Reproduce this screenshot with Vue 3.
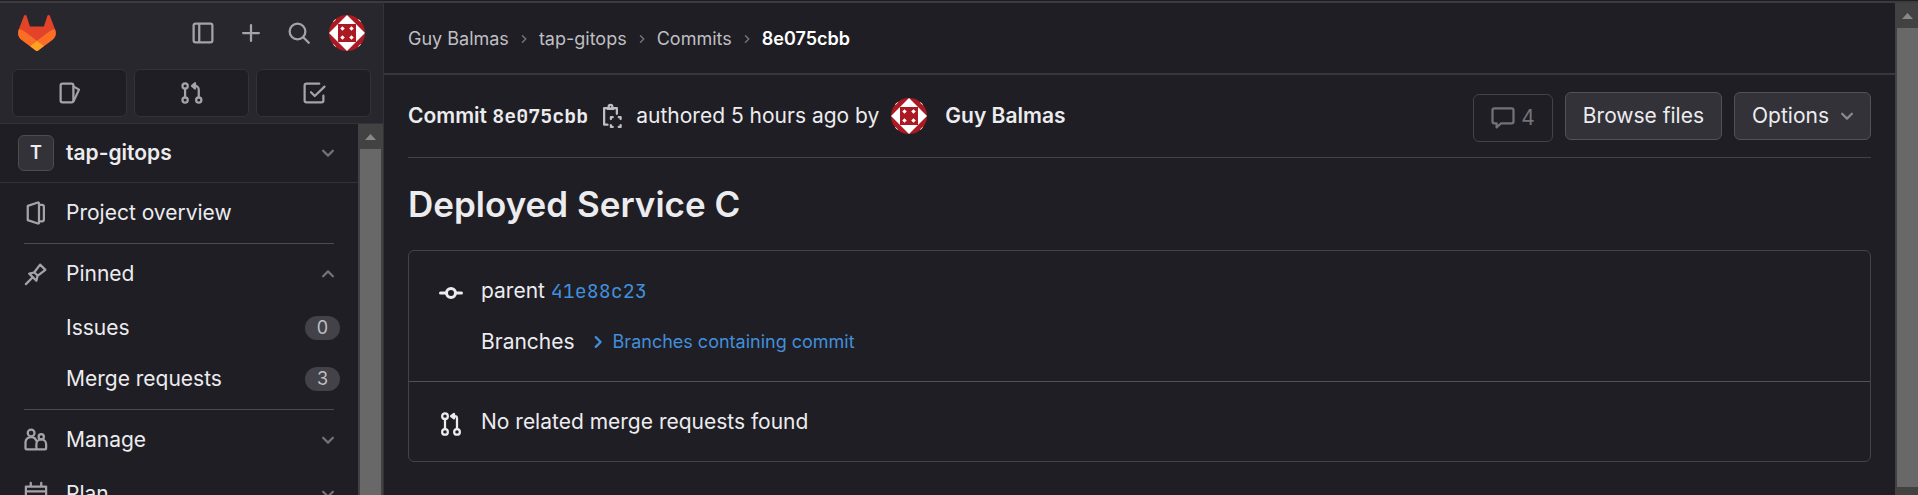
<script setup>
const crumbs = ['Guy Balmas', 'tap-gitops', 'Commits']
const pinned = [
  { label: 'Issues', count: 0 },
  { label: 'Merge requests', count: 3 },
]
</script>

<template>
  <svg class="defs" aria-hidden="true">
    <defs>
      <symbol id="i-down" viewBox="0 0 12 12"><path d="M2.75 4.5 6 7.75 9.25 4.5" /></symbol>
      <symbol id="i-up" viewBox="0 0 12 12"><path d="M2.75 7.5 6 4.25 9.25 7.5" /></symbol>
      <symbol id="i-right" viewBox="0 0 12 12"><path d="M4.5 2.75 7.75 6 4.5 9.25" /></symbol>
      <symbol id="i-avatar" viewBox="0 0 36 36">
        <path class="red" d="M0 0h36v36H0z" />
        <path class="white" d="M18 0 36 18 18 36 0 18z" />
        <path class="red" d="M9 9h18v18H9z" />
        <path class="white" d="M13.500 11.250l2.250 2.250-2.250 2.250-2.250-2.250zM22.500 11.250l2.250 2.250-2.250 2.250-2.250-2.250zM13.500 20.250l2.250 2.250-2.250 2.250-2.250-2.250zM22.500 20.250l2.250 2.250-2.250 2.250-2.250-2.250zM4.500 2l2.500 2.500-2.500 2.500L2 4.500zM31.500 2l2.500 2.500-2.500 2.500L29 4.500zM4.500 29l2.500 2.500-2.500 2.500L2 31.500zM31.500 29l2.500 2.500-2.500 2.500-2.500-2.500z" />
      </symbol>
    </defs>
  </svg>

  <div class="app">
    <aside class="sidebar">
      <header class="top">
        <div class="tools">
          <a href="#" class="logo" aria-label="Homepage">
            <svg viewBox="0 0 25 24">
              <path fill="#e24329" d="m24.507 9.500-.034-.09L21.082.562a.896.896 0 0 0-1.694.091l-2.290 7.010H7.825L5.535.653a.898.898 0 0 0-1.694-.09L.451 9.411.416 9.500a6.297 6.297 0 0 0 2.090 7.278l.012.010.030.022 5.160 3.867 2.560 1.935 1.554 1.176a1.051 1.051 0 0 0 1.268 0l1.555-1.176 2.560-1.935 5.197-3.890.014-.010A6.297 6.297 0 0 0 24.507 9.500Z" />
              <path fill="#fc6d26" d="m24.507 9.500-.034-.09a11.440 11.440 0 0 0-4.560 2.051l-7.447 5.632 4.742 3.584 5.197-3.890.014-.010A6.297 6.297 0 0 0 24.507 9.500Z" />
              <path fill="#fca326" d="m7.707 20.677 2.560 1.935 1.555 1.176a1.051 1.051 0 0 0 1.268 0l1.555-1.176 2.560-1.935-4.743-3.584-4.755 3.584Z" />
              <path fill="#fc6d26" d="M5.010 11.461a11.430 11.430 0 0 0-4.560-2.050L.416 9.500a6.297 6.297 0 0 0 2.090 7.278l.012.010.030.022 5.160 3.867 4.745-3.584-7.444-5.632Z" />
            </svg>
          </a>
          <button class="tool" aria-label="Hide sidebar">
            <svg class="icon" viewBox="0 0 16 16"><rect x="1.750" y="1.750" width="12.500" height="12.500" rx="1.250" /><path d="M5.500 2v12" /></svg>
          </button>
          <button class="tool" aria-label="Create new">
            <svg class="icon" viewBox="0 0 16 16"><path d="M8 2.750v10.500M2.750 8h10.500" /></svg>
          </button>
          <button class="tool" aria-label="Search">
            <svg class="icon" viewBox="0 0 16 16"><circle cx="7" cy="7" r="5.250" /><path d="m11 11 3.500 3.500" /></svg>
          </button>
          <button class="tool" aria-label="User menu"><svg class="avatar"><use href="#i-avatar" /></svg></button>
        </div>
        <nav class="shortcuts" aria-label="Shortcuts">
          <a href="#" aria-label="Issues">
            <svg class="icon" viewBox="0 0 16 16"><rect x="1.750" y="1.750" width="8.500" height="12.500" rx="1.250" /><path d="m10.500 3.750 3.500 2-3.500 7.500" /></svg>
          </a>
          <a href="#" aria-label="Merge requests">
            <svg class="icon" viewBox="0 0 16 16">
              <circle cx="3.400" cy="3.300" r="1.750" /><circle cx="3.400" cy="12.700" r="1.750" /><circle cx="12.500" cy="12.700" r="1.750" />
              <path d="M3.400 5v6M12.500 11V5.750a2.500 2.500 0 0 0-2.500-2.500H9" /><path class="solid" d="M10 1.500v3.500L8 3.250z" />
            </svg>
          </a>
          <a href="#" aria-label="To-Do List">
            <svg class="icon" viewBox="0 0 16 16"><path d="M11.500 1.750H3c-.7 0-1.250.550-1.250 1.250v10c0 .7.550 1.250 1.250 1.250h10c.7 0 1.250-.550 1.250-1.250V9.750M6 7.500l2.500 2.500 6.500-6.250" /></svg>
          </a>
        </nav>
      </header>
      <div class="scroller">
        <div class="menu">
          <button class="project">
            <span class="tile">T</span><span class="name">tap-gitops</span>
            <svg class="chev"><use href="#i-down" /></svg>
          </button>
          <nav class="nav" aria-label="Project">
            <a href="#" class="row">
              <svg class="icon" viewBox="0 0 16 16"><path d="M2.500 3.250 9.250 1c.4-.1.750.1.750.5v13c0 .4-.350.600-.750.500L2.500 12.750zM10.250 2.500h1.750c.7 0 1.250.550 1.250 1.250v8.500c0 .7-.550 1.250-1.250 1.250H10.250" /></svg>
              <span>Project overview</span>
            </a>
            <hr />
            <button class="row">
              <svg class="icon" viewBox="0 0 16 16"><path d="M1.250 14.750 5.500 10.500M3.500 7.750l4.750 4.750.75-3.250 5.250-4-3.500-3.500-4 5.250zM7 7l2 2" /></svg>
              <span>Pinned</span><svg class="chev"><use href="#i-up" /></svg>
            </button>
            <div class="sub">
              <a v-for="p in pinned" :key="p.label" href="#" class="row">
                <span>{{ p.label }}</span><span class="badge">{{ p.count }}</span>
              </a>
            </div>
            <hr />
            <div class="groups">
              <button class="row">
                <svg class="icon" viewBox="0 0 16 16"><circle cx="4.750" cy="3.250" r="2.250" /><path d="M8 14.250H1.750c-.5 0-.750-.250-.750-.750V9.500a3.750 3.750 0 0 1 7.250-1" /><circle cx="11.500" cy="5.750" r="1.750" /><path d="M8.250 13.500V10.750a3.250 3.250 0 0 1 6.500 0v2.750c0 .5-.250.750-.750.750H9c-.5 0-.750-.250-.750-.750z" /></svg>
                <span>Manage</span><svg class="chev"><use href="#i-down" /></svg>
              </button>
              <button class="row">
                <svg class="icon" viewBox="0 0 16 16"><path d="M1.250 3h13.500v11.250H1.250zM1.250 6.250h13.500M4.500.5V3M11.500.5V3" /></svg>
                <span>Plan</span><svg class="chev"><use href="#i-down" /></svg>
              </button>
            </div>
          </nav>
        </div>
        <div class="bar" aria-hidden="true"><svg viewBox="0 0 25 25"><path d="M7 16h11l-5.500-6z" /></svg><i></i></div>
      </div>
    </aside>

    <main class="main">
      <nav class="crumbs" aria-label="Breadcrumbs">
        <template v-for="c in crumbs" :key="c">
          <a href="#">{{ c }}</a><svg class="sep"><use href="#i-right" /></svg>
        </template>
        <a href="#" class="current">8e075cbb</a>
      </nav>
      <div class="content">
        <div class="commit">
          <strong class="sha">Commit <span class="mono">8e075cbb</span></strong>
          <button class="copy" aria-label="Copy commit SHA">
            <svg class="icon" viewBox="0 0 16 16"><path d="M5 2.750H2.750v11H5M9 2.750h2.250V6.500M5 3.250h4" /><circle cx="7" cy="1.750" r="1.250" /><path d="M7.250 10V8.750H8.500M12.500 8.750h1.250V10M13.750 14v1.250H12.500M8.500 15.250H7.250V14" /></svg>
          </button>
          <span>authored 5 hours ago by</span>
          <a href="#" class="author"><svg class="avatar"><use href="#i-avatar" /></svg><strong>Guy Balmas</strong></a>
          <div class="actions">
            <a href="#" class="notes" aria-label="4 comments">
              <svg class="icon" viewBox="0 0 16 16"><path d="M2.250 1.500h11.500c.7 0 1.250.550 1.250 1.250v7.500c0 .7-.550 1.250-1.250 1.250H6.750l-3 2.750v-2.750H2.250C1.550 11.500 1 10.950 1 10.250v-7.500c0-.7.550-1.250 1.250-1.250z" /></svg>4
            </a>
            <a href="#" class="btn">Browse files</a>
            <button class="btn menu-btn">Options<svg class="chev"><use href="#i-down" /></svg></button>
          </div>
        </div>
        <h1>Deployed Service C</h1>
        <section class="box">
          <div class="info">
            <svg class="icon bold" viewBox="0 0 16 16"><circle cx="8" cy="8" r="3" /><path d="M1 8h4M11 8h4" /></svg>
            <div class="lines">
              <p>parent <a href="#" class="mono">41e88c23</a></p>
              <p class="branches">Branches <a href="#"><svg class="chev"><use href="#i-right" /></svg>Branches containing commit</a></p>
            </div>
          </div>
          <div class="info second">
            <svg class="icon" viewBox="0 0 16 16">
              <circle cx="4" cy="2.750" r="1.900" /><circle cx="4" cy="13.250" r="1.900" /><circle cx="12" cy="13.250" r="1.900" />
              <path d="M4 4.750v6.500M12 11.250V4.250a1.500 1.500 0 0 0-1.500-1.500H9.500" /><path class="solid" d="M10 1.250v3L8 2.750z" />
            </svg>
            <p>No related merge requests found</p>
          </div>
        </section>
      </div>
    </main>
    <div class="bar page" aria-hidden="true"><svg viewBox="0 0 25 25"><path d="M7 16h11l-5.500-6z" /></svg><i></i></div>
  </div>
</template>

<style>
body { margin: 0; background: #1f1e24; }
</style>

<style scoped>
.defs { position: absolute; width: 0; height: 0; }
.app {
  display: grid; grid-template-columns: 384px minmax(0, 1fr) 23px; height: 100vh; overflow: hidden;
  box-sizing: border-box; padding-top: 1px; background: #1f1e24;
  color: #ececef; font: 21px/30px Inter, "Noto Sans", sans-serif;
}
.app > * { border-top: 2px solid #3d3b3d; min-height: 0; }
a { color: inherit; text-decoration: none; }
button { font: inherit; color: inherit; background: none; border: 0; padding: 0; }
p { margin: 0; }
strong { font-weight: 600; }
svg { flex: none; display: block; }
.icon { width: 24px; height: 24px; overflow: visible; }
.chev { width: 18px; height: 18px; color: #737278; }
.icon, .chev, .sep { fill: none; stroke: currentColor; stroke-width: 1.5; stroke-linecap: round; stroke-linejoin: round; }
.bold { stroke-width: 2; }
.solid { fill: currentColor; }
.avatar { width: 36px; height: 36px; border-radius: 50%; }
.red { fill: #ab1a22; }
.white { fill: #fff; }
.mono { font-family: "JetBrains Mono", "Liberation Mono", monospace; font-size: 20px; }

.sidebar { display: flex; flex-direction: column; border-right: 1px solid #333238; }
.top { background: #28272d; border-bottom: 1px solid #333238; color: #a4a3a8; }
.tools { display: flex; align-items: center; height: 60px; padding: 0 12px 0 18px; }
.logo { margin-right: auto; }
.logo svg { width: 38px; height: 36px; }
.tool { width: 48px; height: 48px; display: grid; place-items: center; }
.shortcuts { display: grid; grid-template-columns: repeat(3, 1fr); gap: 7px; padding: 6px 12px; }
.shortcuts a { display: grid; place-items: center; height: 46px; border: 1px solid #333238; border-radius: 6px; background: #1f1e24; }
.scroller { flex: 1; min-height: 0; display: flex; overflow: hidden; }
.menu { flex: 1; }
.project { width: 100%; display: flex; align-items: center; gap: 12px; height: 59px; padding: 0 21px 0 18px; border-bottom: 1px solid #333238; box-sizing: border-box; }
.tile { width: 34px; height: 34px; border: 1px solid #4c4b51; border-radius: 6px; background: #333238; font-size: 18px; line-height: 34px; font-weight: 600; text-align: center; }
.name { font-weight: 600; }
.project .chev, .row .chev { margin-left: auto; }
.nav { padding: 6px 0; }
.row { box-sizing: border-box; width: 100%; display: flex; align-items: center; gap: 18px; height: 48px; padding: 0 21px 0 24px; }
.row .icon { color: #a4a3a8; }
.nav hr { height: 1px; border: 0; margin: 6px 24px; background: #4c4b51; }
.sub { display: grid; gap: 3px; padding-top: 6px; }
.sub .row { padding: 0 18px 0 66px; }
.badge { margin-left: auto; box-sizing: border-box; min-width: 35px; padding: 0 12px; border-radius: 12px; background: #434248; color: #bfbfc3; font-size: 18px; line-height: 24px; text-align: center; }
.groups { display: grid; gap: 6px; }

.bar { width: 25px; box-sizing: border-box; background: #424242; display: flex; flex-direction: column; }
.bar svg { width: 25px; height: 25px; fill: #888; }
.bar i { flex: 1; margin: 0 2px; background: #686868; }
.page { width: auto; overflow: hidden; padding-bottom: 8px; }
.page i { margin-right: 0; }

.crumbs { box-sizing: border-box; display: flex; align-items: center; height: 72px; padding: 2px 24px 0; border-bottom: 2px solid #38373d; font-size: 18px; color: #bfbfc3; }
.sep { width: 12px; height: 12px; margin: 0 9px; color: #737278; }
.current { color: #fff; font-weight: 600; }
.content { padding: 0 24px; }
.commit { display: flex; align-items: center; height: 82px; border-bottom: 1px solid #434248; }
.copy { margin: 0 12px; color: #bfbfc3; }
.author { display: flex; align-items: center; gap: 18px; margin-left: 12px; }
.actions { margin-left: auto; display: flex; align-items: center; gap: 12px; }
.btn, .notes { box-sizing: border-box; height: 48px; display: flex; align-items: center; border: 1px solid #535158; border-radius: 6px; padding: 0 17px; background: #333238; }
.menu-btn { padding-right: 14px; }
.btn .chev { margin-left: 9px; color: #89888d; }
.notes { gap: 6px; margin-top: 4px; background: none; border-color: #434248; color: #737278; }
h1 { margin: 21px 0; font-size: 35px; line-height: 50px; font-weight: 600; }
.box { border: 1px solid #434248; border-radius: 6px; }
.info { display: flex; padding: 25px 30px 24px; gap: 18px; }
.info .icon { margin-top: 5px; }
.info a { color: #428fdc; }
.lines { display: grid; gap: 21px; }
.branches { display: flex; align-items: center; }
.branches a { display: flex; align-items: center; margin-left: 14px; gap: 6px; font-size: 18px; }
.branches .chev { color: #428fdc; }
.second { border-top: 1px solid #535158; }
</style>
